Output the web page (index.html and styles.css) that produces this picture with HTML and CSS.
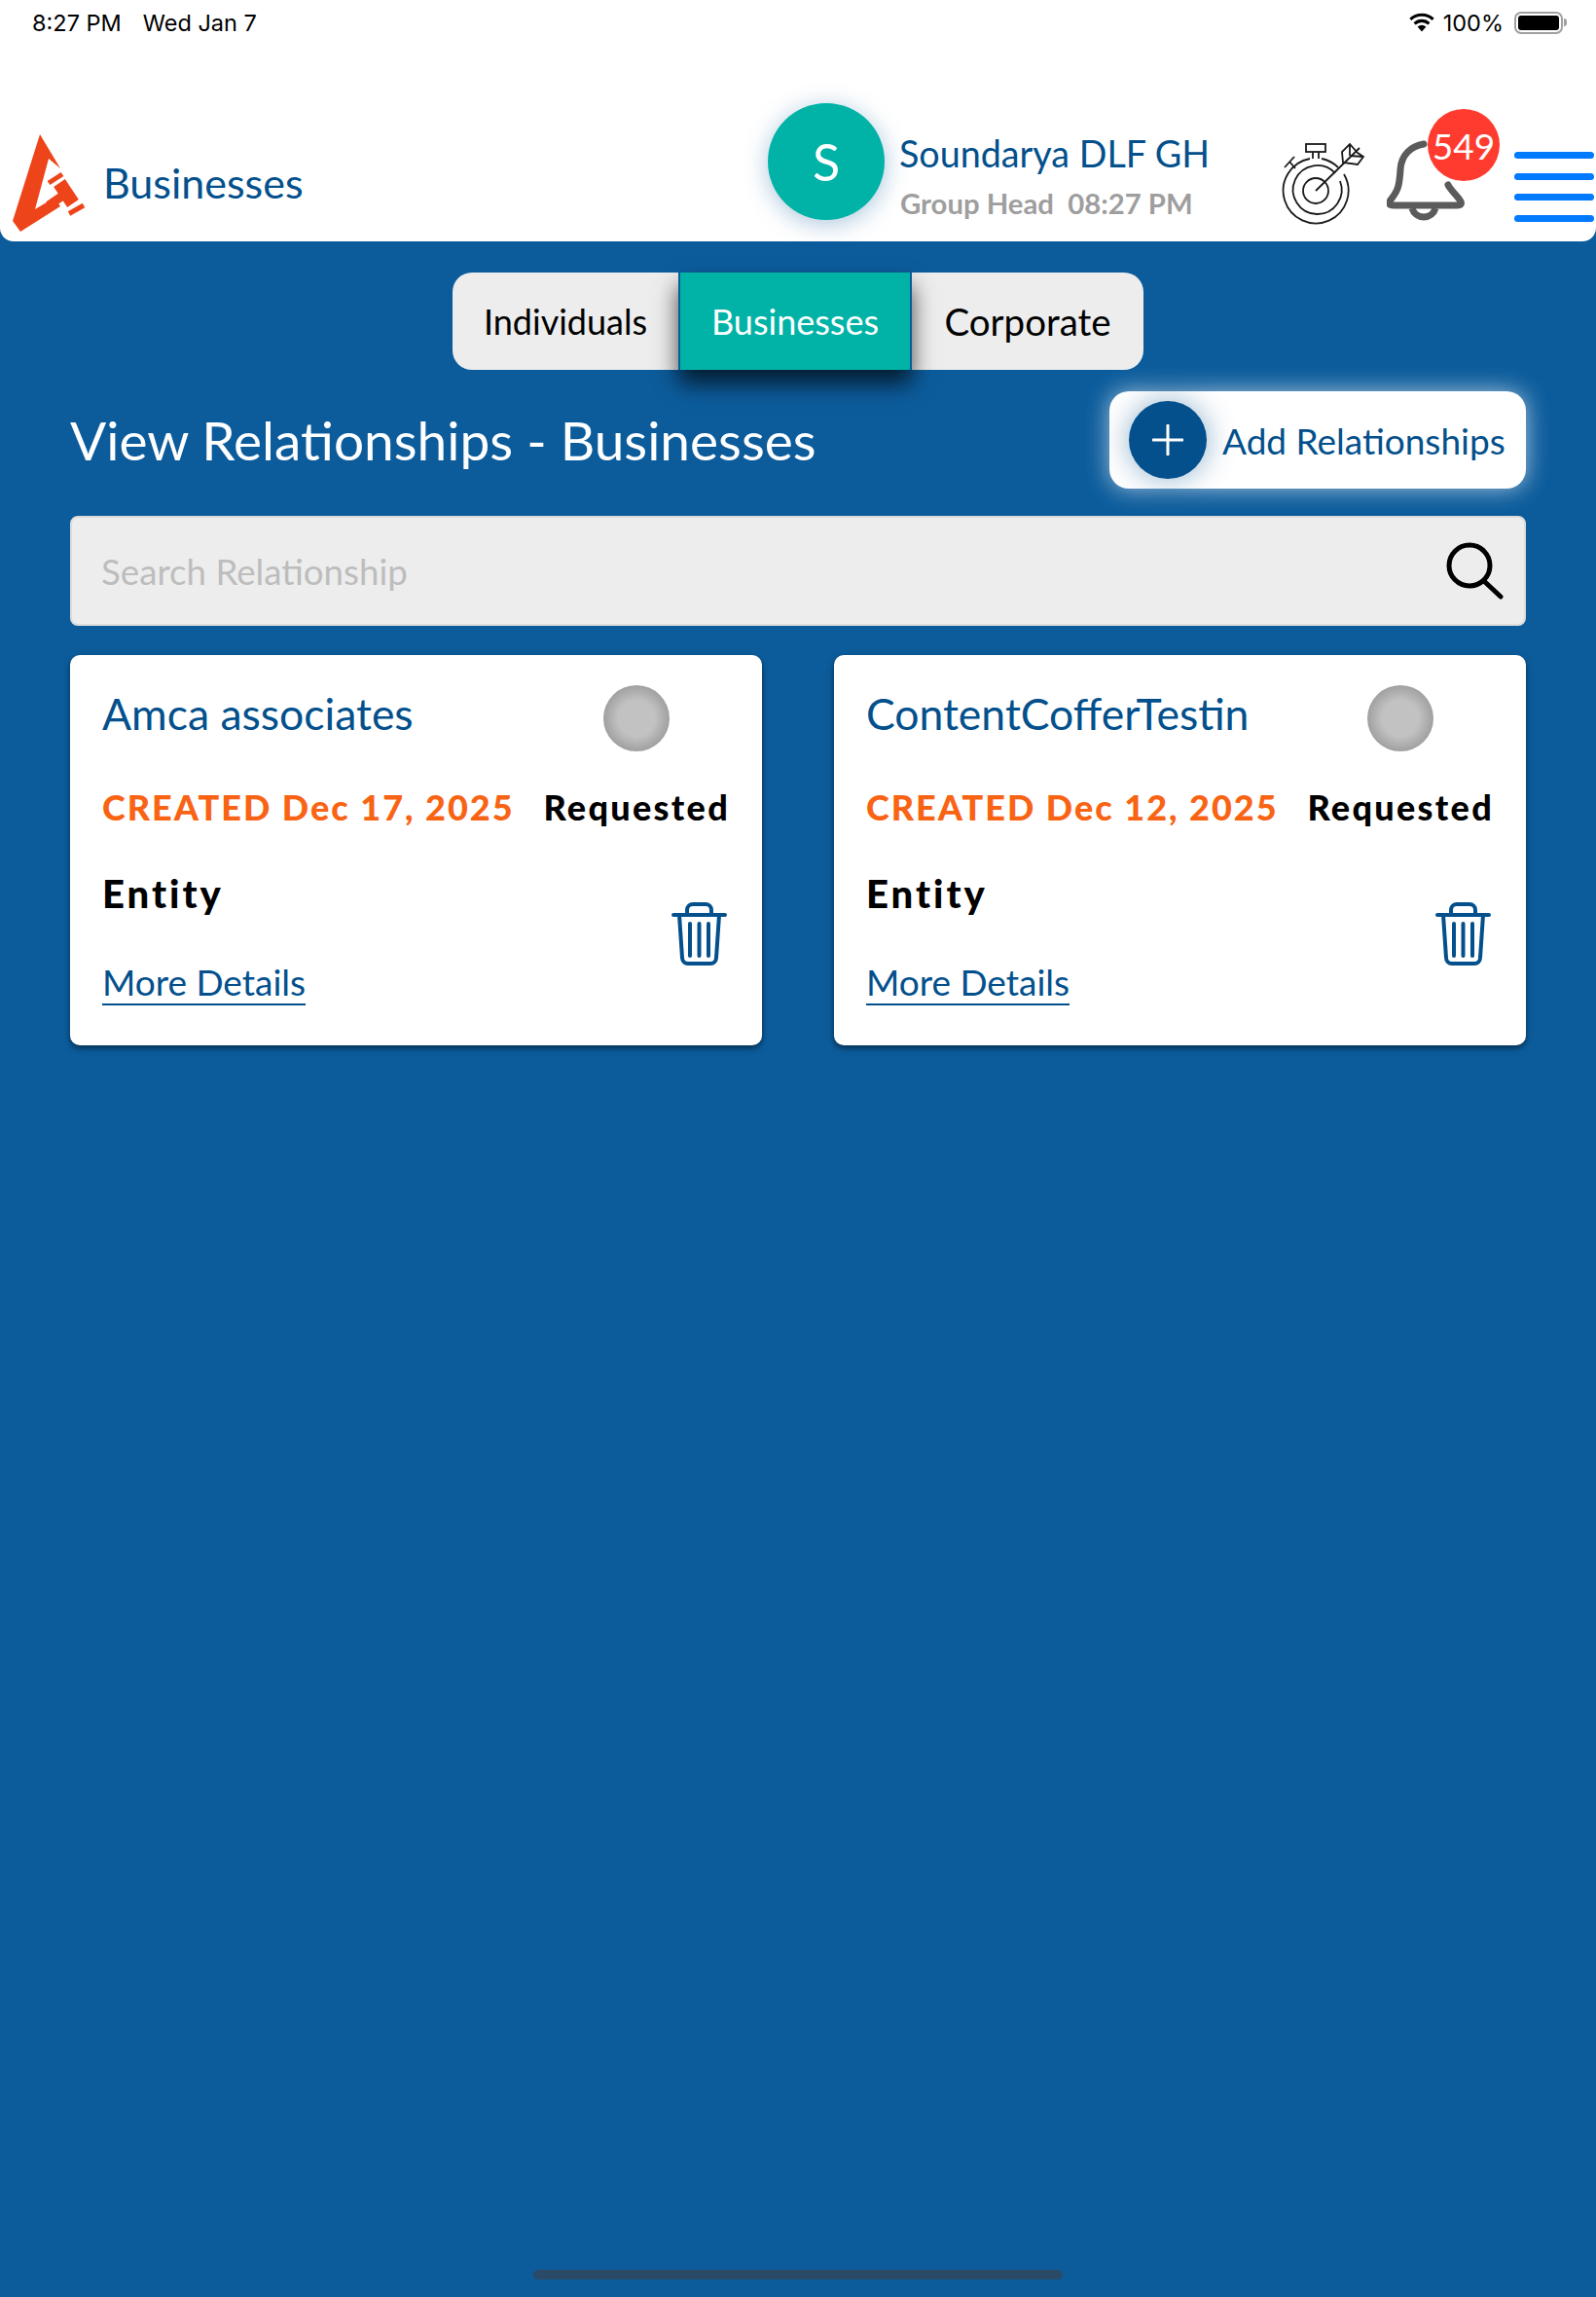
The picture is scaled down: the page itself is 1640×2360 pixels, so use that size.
FILE: index.html
```html
<!DOCTYPE html>
<html lang="en">
<head>
    <meta charset="UTF-8">
    <meta name="viewport" content="width=device-width, initial-scale=1.0">
    <title>Businesses</title>
    <link rel="stylesheet" href="styles.css">
</head>
<body>
    <header class="top">
        <div class="status-bar">
            <span class="status-time">8:27 PM</span>
            <span class="status-date">Wed Jan 7</span>
            <svg class="wifi" viewBox="0 0 28 20">
                <path d="M14 19.5 9.6 14.6a6.4 6.4 0 0 1 8.8 0Z" fill="#000"/>
                <path d="M6.6 11.4a10.8 10.8 0 0 1 14.8 0M2.4 6.8a17 17 0 0 1 23.2 0" fill="none" stroke="#000" stroke-width="3.2"/>
            </svg>
            <span class="status-pct">100%</span>
            <div class="battery"><div class="battery-fill"></div></div>
            <div class="battery-tip"></div>
        </div>
        <div class="app-bar">
            <svg class="logo" viewBox="10 135 80 105">
                <path d="M41 138 62 173 50 163 36 215 56 203 62 212 21 238 13 227Z" fill="#ee4419"/>
                <g fill="none" stroke="#ee4419" stroke-linecap="butt">
                    <path d="M50 188 64 179" stroke-width="5"/>
                    <path d="M71 219.5 86 211" stroke-width="5"/>
                    <path d="M61 188 75 209" stroke-width="14"/>
                    <path d="M66 200 50 211" stroke-width="9"/>
                </g>
            </svg>
            <div class="page-name">Businesses</div>
            <div class="avatar">S</div>
            <div class="user">
                <div class="user-name">Soundarya DLF GH</div>
                <div class="user-role">Group Head&nbsp; 08:27 PM</div>
            </div>
            <svg class="goal-icon" viewBox="0 0 90 90" fill="none" stroke="#1a1a1a" stroke-width="1.8">
                <path d="M43 20A33.5 33.5 0 0 1 60 29M66 36A33.5 33.5 0 1 1 31 20"/>
                <path d="M57 35A25 25 0 1 0 62 43"/>
                <circle cx="37" cy="53" r="13"/>
                <rect x="27" y="5" width="20" height="8"/>
                <path d="M34 13V20M40 13V20M5 29 15 18M10 23 16 30"/>
                <path d="M37 53 82 9"/>
                <path d="M65 24 64 13 72 5 80 14 86 18 80 26 65 24ZM72 5 72 17M86 18 72 17"/>
            </svg>
            <div class="bell">
                <svg class="bell-icon" viewBox="0 0 80 90" fill="none" stroke="#5b5b5b" stroke-width="7" stroke-linecap="round" stroke-linejoin="round">
                    <path d="M38 6C25 8 15 17 14 32 13 50 11 54 5 62 1 67 2 69 7 69H72C77 69 78 67 74 62 69 56 65 52 63 48"/>
                    <path d="M26 72A12.5 12.5 0 0 0 50 72" stroke-linecap="butt"/>
                </svg>
                <span class="badge">549</span>
            </div>
            <div class="burger"><i></i><i></i><i></i><i></i></div>
        </div>
    </header>

    <main class="content">
        <div class="tabs">
            <div class="tab tab-first">Individuals</div>
            <div class="tab tab-active">Businesses</div>
            <div class="tab tab-last">Corporate</div>
        </div>

        <div class="title-row">
            <h1 class="title">View Relationships - Businesses</h1>
            <div class="add-btn">
                <span class="add-circle">
                    <svg viewBox="0 0 32 32" fill="none" stroke="#fff" stroke-width="3" stroke-linecap="round"><path d="M16 1V31M1 16H31"/></svg>
                </span>
                <span class="add-label">Add Relationships</span>
            </div>
        </div>

        <div class="search">
            <span class="search-text">Search Relationship</span>
            <svg class="search-icon" viewBox="0 0 60 60" fill="none" stroke="#000" stroke-width="5" stroke-linecap="round">
                <circle cx="24" cy="24" r="21"/>
                <path d="M40 41 56 56"/>
            </svg>
        </div>

        <div class="cards">
            <div class="card">
                <div class="card-head">
                    <div class="card-name">Amca associates</div>
                    <div class="card-dot"></div>
                </div>
                <div class="card-meta">
                    <span class="created">CREATED Dec 17, 2025</span>
                    <span class="state">Requested</span>
                </div>
                <div class="card-foot">
                    <div>
                        <div class="entity">Entity</div>
                        <a class="more" href="#">More Details</a>
                    </div>
                    <svg class="trash" viewBox="0 0 57 65" fill="none" stroke="#03508c" stroke-width="4" stroke-linecap="round">
                        <path d="M16 12V8A6 6 0 0 1 22 2H35A6 6 0 0 1 41 8V12M2 13H55M8 13 11 57A6 6 0 0 0 17 63H40A6 6 0 0 0 46 57L49 13M19 22V55M28.5 22V55M38 22V55"/>
                    </svg>
                </div>
            </div>
            <div class="card">
                <div class="card-head">
                    <div class="card-name">ContentCofferTestin</div>
                    <div class="card-dot"></div>
                </div>
                <div class="card-meta">
                    <span class="created">CREATED Dec 12, 2025</span>
                    <span class="state">Requested</span>
                </div>
                <div class="card-foot">
                    <div>
                        <div class="entity">Entity</div>
                        <a class="more" href="#">More Details</a>
                    </div>
                    <svg class="trash" viewBox="0 0 57 65" fill="none" stroke="#03508c" stroke-width="4" stroke-linecap="round">
                        <path d="M16 12V8A6 6 0 0 1 22 2H35A6 6 0 0 1 41 8V12M2 13H55M8 13 11 57A6 6 0 0 0 17 63H40A6 6 0 0 0 46 57L49 13M19 22V55M28.5 22V55M38 22V55"/>
                    </svg>
                </div>
            </div>
        </div>
    </main>

    <div class="home-bar"></div>
</body>
</html>
```

FILE: styles.css
```css
* { box-sizing: border-box; }

html, body { height: 100%; }

body {
    margin: 0;
    background: #0c5c9c;
    font-family: "Lato", "Open Sans", sans-serif;
    display: flex;
    flex-direction: column;
}

/* Header */
.top {
    height: 248px;
    background: #fff;
    border-radius: 0 0 14px 14px;
}

.status-bar {
    height: 46px;
    padding: 0 30px 0 33px;
    display: flex;
    align-items: center;
    font-family: "Inter", sans-serif;
    font-size: 23.5px;
    color: #000;
}

.status-date { margin-left: 22px; }
.wifi { width: 28px; height: 20px; margin-left: auto; }
.status-pct { margin-left: 8px; }

.battery {
    width: 50px;
    height: 23px;
    margin-left: 11px;
    border: 2px solid #a0a0a0;
    border-radius: 7px;
    padding: 2px;
}

.battery-fill { width: 100%; height: 100%; background: #000; border-radius: 3px; }
.battery-tip { width: 3px; height: 8px; background: #a0a0a0; border-radius: 0 3px 3px 0; margin-left: 1px; }

.app-bar {
    height: 202px;
    display: flex;
    align-items: center;
    padding: 4px 0 0 10px;
    position: relative;
}

.logo { width: 80px; height: 105px; margin-top: 76px; }

.page-name {
    margin-left: 16px;
    margin-top: 76px;
    font-size: 43px;
    color: #03508c;
    width: 202px;
    white-space: nowrap;
}

.avatar {
    width: 120px;
    height: 120px;
    margin-left: 481px;
    margin-top: 34px;
    border-radius: 50%;
    background: #00b3a6;
    color: #fff;
    font-size: 52px;
    display: flex;
    align-items: center;
    justify-content: center;
    box-shadow: 0 4px 24px rgba(12, 92, 156, 0.35);
}

.user { margin-left: 15px; margin-top: 62px; width: 391px; }
.user-name { font-size: 37.7px; color: #03508c; white-space: nowrap; line-height: 50px; }
.user-role { font-size: 29.3px; font-weight: 700; color: #9e9e9e; white-space: nowrap; margin: 8px 0 0 1px; line-height: 36px; }

.goal-icon { width: 90px; height: 90px; margin-top: 78px; flex: none; }

.bell { position: relative; width: 80px; height: 90px; margin-left: 20px; margin-top: 76px; flex: none; }
.bell-icon { width: 80px; height: 90px; display: block; }

.badge {
    position: absolute;
    left: 42px;
    top: -30px;
    width: 74px;
    height: 74px;
    border-radius: 50%;
    background: #ff3b30;
    color: #fff;
    font-size: 37px;
    display: flex;
    align-items: center;
    justify-content: center;
}

.burger { margin-left: 51px; margin-top: 86px; width: 82px; flex: none; display: flex; flex-direction: column; gap: 14.7px; }
.burger i { display: block; height: 7px; background: #007aff; border-radius: 4px; }

/* Main */
.content { flex: 1; padding: 32px 72px 0; }

.tabs { display: flex; justify-content: center; }

.tab {
    height: 100px;
    display: flex;
    align-items: center;
    justify-content: center;
    background: #ededed;
    color: #000;
    font-size: 36px;
}

.tab-first { width: 232px; border-radius: 20px 0 0 20px; }
.tab-last { width: 238px; border-radius: 0 20px 20px 0; font-size: 38.5px; }

.tab-active {
    width: 240px;
    background: #00b3a6;
    color: #fff;
    border-left: 2px solid #0c5c9c;
    border-right: 2px solid #0c5c9c;
    box-shadow: 0 14px 22px rgba(0, 0, 0, 0.7);
    position: relative;
}

.title-row { display: flex; align-items: center; justify-content: space-between; margin-top: 22px; }

.title { margin: 0; font-size: 55px; font-weight: 400; color: #fff; white-space: nowrap; }

.add-btn {
    width: 428px;
    height: 100px;
    background: #fff;
    border-radius: 20px;
    display: flex;
    align-items: center;
    padding-left: 20px;
    box-shadow: 0 0 24px rgba(255, 255, 255, 0.65);
}

.add-circle {
    width: 80px;
    height: 80px;
    border-radius: 50%;
    background: #03508c;
    display: flex;
    align-items: center;
    justify-content: center;
    box-shadow: 0 0 30px rgba(3, 80, 140, 0.45);
    flex: none;
}

.add-circle svg { width: 32px; height: 32px; }
.add-label { margin-left: 16px; font-size: 37px; color: #03508c; white-space: nowrap; }

.search {
    height: 113px;
    margin-top: 28px;
    background: #ededed;
    border: 2px solid #dcdcdc;
    border-radius: 8px;
    display: flex;
    align-items: center;
    justify-content: space-between;
    padding: 0 20px 0 30px;
}

.search-text { font-size: 36.7px; color: #bdbdbd; }
.search-icon { width: 60px; height: 60px; }

.cards { display: grid; grid-template-columns: 711px 711px; gap: 74px; margin-top: 30px; }

.card {
    height: 401px;
    background: #fff;
    border-radius: 10px;
    padding: 0 33px;
    box-shadow: 0 3px 6px rgba(0, 0, 0, 0.5);
}

.card-head { display: flex; justify-content: space-between; padding-top: 30px; height: 133px; }
.card-name { font-size: 44.5px; color: #03508c; white-space: nowrap; line-height: 60px; }
.card-dot {
    width: 68px;
    height: 68px;
    margin-right: 62px;
    margin-top: 1px;
    border-radius: 50%;
    background: radial-gradient(closest-side, #c2c2c2 55%, #a0a0a0 100%);
    flex: none;
}

.card-meta { display: flex; justify-content: space-between; font-size: 36px; font-weight: 900; line-height: 46px; letter-spacing: 2px; }
.created { color: #f96314; }
.state { color: #000; letter-spacing: 2.3px; }

.card-foot { display: flex; justify-content: space-between; align-items: center; margin-top: 41px; }
.entity { font-size: 40px; font-weight: 900; color: #000; line-height: 50px; letter-spacing: 3px; }
.more {
    display: inline-block;
    margin-top: 44px;
    font-size: 37px;
    line-height: 44px;
    color: #03508c;
    text-decoration: none;
    border-bottom: 2px solid #03508c;
}

.trash { width: 57px; height: 65px; margin-right: 3px; margin-top: -7px; }

.home-bar {
    width: 544px;
    height: 10px;
    margin: 0 auto 18px;
    background: #2b4a68;
    border-radius: 5px;
}
```
